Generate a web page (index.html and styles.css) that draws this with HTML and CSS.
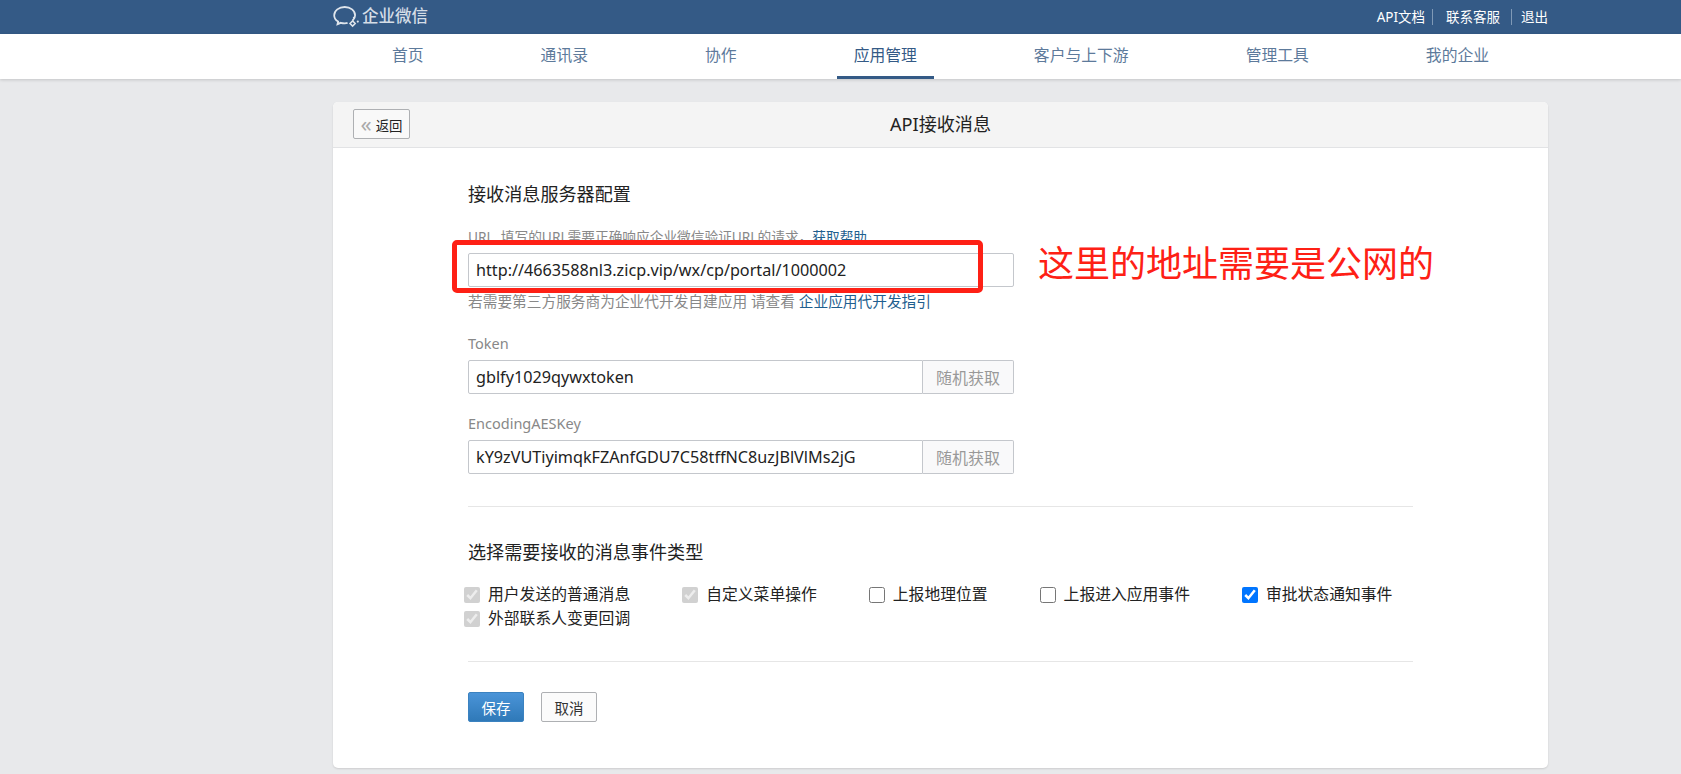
FILE: index.html
```html
<!DOCTYPE html>
<html lang="zh-CN">
<head>
    <meta charset="UTF-8">
    <title>API接收消息 | 企业微信</title>
    <link rel="stylesheet" href="styles.css">
</head>
<body>
    <header class="topbar">
        <div class="wrap topbar-inner">
            <a class="logo" href="#">
                <svg class="logo-icon" viewBox="0 0 27 22" width="27" height="22" fill="none" stroke="#dfe5ec" stroke-width="1.8">
                    <path d="M19.6 14.5c1.6-1.5 2.5-3.300 2.500-5.300C22.100 4.700 17.500 1 11.700 1S1.200 4.700 1.200 9.200c0 2.600 1.500 4.900 3.900 6.400l-.6 2.600 3.300-1.400c1.200.3 2.500.5 3.900.5 1 0 2-.1 2.900-.4"/>
                    <path d="M17 17.500l2.600-2.600 2.600 2.600-2.600 2.600z" stroke-width="1.500"/>
                    <circle cx="24.800" cy="15.600" r="1.100" fill="#dfe5ec" stroke="none"/>
                    <circle cx="20.800" cy="11.800" r="1" fill="#dfe5ec" stroke="none"/>
                </svg>
                <span>企业微信</span>
            </a>
            <div class="toplinks">
                <a href="#">API文档</a>
                <a href="#">联系客服</a>
                <a href="#">退出</a>
            </div>
        </div>
    </header>

    <nav class="mainnav">
        <div class="wrap nav-list">
            <a href="#">首页</a>
            <a href="#">通讯录</a>
            <a href="#">协作</a>
            <a href="#" class="active">应用管理</a>
            <a href="#">客户与上下游</a>
            <a href="#">管理工具</a>
            <a href="#">我的企业</a>
        </div>
    </nav>

    <main class="wrap card">
        <div class="card-head">
            <button class="btn-back" type="button"><span class="chevrons">«</span>返回</button>
            <h1>API接收消息</h1>
        </div>

        <div class="card-body">
            <h2>接收消息服务器配置</h2>

            <div class="field url-field">
                <label>URL&nbsp; 填写的URL需要正确响应企业微信验证URL的请求，<a href="#">获取帮助</a></label>
                <input type="text" class="text-input" value="http://4663588nl3.zicp.vip/wx/cp/portal/1000002">
                <p class="hint">若需要第三方服务商为企业代开发自建应用 请查看 <a href="#">企业应用代开发指引</a></p>
                <div class="mark-box"></div>
                <div class="mark-text">这里的地址需要是公网的</div>
            </div>

            <div class="field">
                <label>Token</label>
                <div class="input-group">
                    <input type="text" class="text-input" value="gblfy1029qywxtoken">
                    <button type="button" class="btn-random">随机获取</button>
                </div>
            </div>

            <div class="field">
                <label>EncodingAESKey</label>
                <div class="input-group">
                    <input type="text" class="text-input" value="kY9zVUTiyimqkFZAnfGDU7C58tffNC8uzJBlVlMs2jG">
                    <button type="button" class="btn-random">随机获取</button>
                </div>
            </div>

            <hr class="divider first">

            <h2>选择需要接收的消息事件类型</h2>

            <div class="check-list">
                <label class="check"><input type="checkbox" checked disabled>用户发送的普通消息</label>
                <label class="check"><input type="checkbox" checked disabled>自定义菜单操作</label>
                <label class="check"><input type="checkbox">上报地理位置</label>
                <label class="check"><input type="checkbox">上报进入应用事件</label>
                <label class="check"><input type="checkbox" checked>审批状态通知事件</label>
                <label class="check"><input type="checkbox" checked disabled>外部联系人变更回调</label>
            </div>

            <hr class="divider">

            <div class="actions">
                <button type="button" class="btn btn-primary">保存</button>
                <button type="button" class="btn">取消</button>
            </div>
        </div>
    </main>
</body>
</html>
```

FILE: styles.css
```css
* {
    box-sizing: border-box;
}
body {
    margin: 0;
    height: 774px;
    overflow: hidden;
    background: #e8e9eb;
    color: #222;
    font-family: "Noto Sans", "Noto Sans CJK SC", sans-serif;
    font-size: 15.8px;
}
a {
    text-decoration: none;
}
.wrap {
    width: 1215px;
    margin-left: 333px;
}

/* barra superior */
.topbar {
    height: 34px;
    background: #345a86;
}
.topbar-inner {
    display: flex;
    justify-content: space-between;
    align-items: center;
    height: 34px;
}
.logo {
    display: flex;
    align-items: center;
    gap: 2px;
    color: #d5dde6;
    font-size: 16.5px;
    font-weight: 500;
}
.logo span {
    margin-bottom: 4px;
}
.logo-icon {
    display: block;
}
.toplinks {
    display: flex;
    font-size: 13.5px;
    line-height: 16px;
}
.toplinks a {
    color: #fff;
}
.toplinks a + a {
    margin-left: 7px;
    padding-left: 13px;
    border-left: 1px solid #7f99b6;
}
.toplinks a:last-child {
    padding-left: 9px;
    margin-left: 11px;
}

/* navegacion */
.mainnav {
    height: 45px;
    background: #fff;
    box-shadow: 0 1px 3px rgba(0,0,0,0.16);
}
.nav-list {
    display: flex;
    gap: 83px;
    padding-left: 42px;
}
.nav-list a {
    height: 45px;
    padding: 0 17px;
    color: #5d7a9b;
    line-height: 43px;
    border-bottom: 3px solid transparent;
}
.nav-list a.active {
    color: #345a86;
    border-bottom-color: #345a86;
}

/* tarjeta */
.card {
    height: 666px;
    margin-top: 23px;
    background: #fff;
    border-radius: 5px;
    box-shadow: 0 1px 2px rgba(0,0,0,0.12);
}
.card-head {
    position: relative;
    height: 46px;
    padding: 7px 20px;
    background: #f4f4f4;
    border-bottom: 1px solid #e2e3e5;
    border-radius: 5px 5px 0 0;
}
.card-head h1 {
    margin: 0;
    font-size: 18.1px;
    font-weight: 400;
    line-height: 30px;
    text-align: center;
}
.btn-back {
    position: absolute;
    top: 7px;
    left: 20px;
    width: 57px;
    height: 30px;
    padding: 0;
    background: #f9f9f9;
    border: 1px solid #aeb0b3;
    border-radius: 2px;
    color: #222;
    font: inherit;
    font-size: 13.4px;
}
.chevrons {
    margin-right: 4px;
    color: #aaa;
    font-size: 22px;
    line-height: 20px;
    vertical-align: -1px;
}
.card-body {
    padding: 34px 135px 0;
}
.card-body h2 {
    margin: 0;
    font-size: 18.1px;
    font-weight: 400;
    line-height: 24px;
}

/* campos */
.field {
    margin-top: 21px;
    width: 546px;
}
.field + .field {
    margin-top: 22px;
}
.field + .field + .field {
    margin-top: 19px;
}
.field label {
    display: block;
    margin-bottom: 6px;
    color: #888;
    font-size: 14.5px;
    line-height: 20px;
    white-space: nowrap;
}
.field + .field label {
    margin-bottom: 7px;
}
.url-field label {
    font-size: 13.7px;
}
.field a {
    color: #1f5f8f;
}
.url-field {
    position: relative;
}
.text-input {
    display: block;
    width: 100%;
    height: 34px;
    padding: 0 7px;
    background: #fff;
    border: 1px solid #c4c7cc;
    border-radius: 2px;
    color: #222;
    font: inherit;
    font-size: 16.2px;
    outline: none;
}
.hint {
    margin: 4px 0 0;
    color: #888;
    font-size: 14.7px;
    line-height: 20px;
    white-space: nowrap;
}
.input-group {
    display: flex;
}
.input-group .text-input {
    flex: 1;
    border-radius: 2px 0 0 2px;
}
.btn-random {
    width: 91px;
    height: 34px;
    padding: 0;
    background: #f9f9fa;
    border: 1px solid #c4c7cc;
    border-left: 0;
    border-radius: 0 2px 2px 0;
    color: #999;
    font: inherit;
    font-size: 16px;
}

/* anotacion roja sobre la captura */
.mark-box {
    position: absolute;
    top: 13px;
    left: -16px;
    width: 531px;
    height: 53px;
    border: 5px solid #fe2015;
    border-radius: 5px;
}
.mark-text {
    position: absolute;
    top: 12px;
    left: 570px;
    color: #fe2015;
    font-size: 36px;
    line-height: 50px;
    white-space: nowrap;
}

.divider {
    margin: 0;
    height: 1px;
    background: #e6e6e6;
    border: 0;
}
.divider.first {
    margin: 32px 0 33px;
}

/* checkboxes */
.check-list {
    display: flex;
    flex-wrap: wrap;
    column-gap: 52px;
    margin: 17px 0 32px -4px;
}
.check {
    display: flex;
    align-items: center;
    height: 24px;
    white-space: nowrap;
}
.check input {
    width: 16px;
    height: 16px;
    margin: 4px 8px 0 0;
}

.actions {
    display: flex;
    gap: 17px;
    margin-top: 30px;
}
.btn {
    width: 56px;
    height: 30px;
    padding: 0;
    background: #fbfbfb;
    border: 1px solid #aeb0b3;
    border-radius: 2px;
    color: #333;
    font: inherit;
    font-size: 14.5px;
}
.btn-primary {
    background: linear-gradient(#4a94d8, #2f79b8);
    border-color: #3b82c0;
    color: #fff;
}
```
